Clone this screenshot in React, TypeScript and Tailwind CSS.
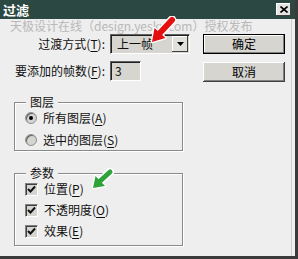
const font = "font-['SimSun','Noto_Sans_CJK_SC',sans-serif]";

const Ul = ({ c }: { c: string }) => <span className="underline underline-offset-2">{c}</span>;

const Checkbox = () => (
  <span className="w-[13px] h-[13px] border border-t-[#808080] border-l-[#808080] border-b-white border-r-white bg-[#d4d4d0] flex items-center justify-center shadow-[inset_1px_1px_0_#404040]">
    <svg width="9" height="9" viewBox="0 0 9 9">
      <path d="M1 4 L3.5 6.5 L8 1.5" stroke="#111" strokeWidth="2" fill="none" />
    </svg>
  </span>
);

const Radio = ({ on }: { on?: boolean }) => (
  <span className="w-[12px] h-[12px] rounded-full bg-[#d4d4d0] border border-[#909090] flex items-center justify-center shadow-[inset_1px_1px_0_#606060]">
    {on && <span className="w-[4px] h-[4px] rounded-full bg-black" />}
  </span>
);

const Button = ({ label, def }: { label: string; def?: boolean }) => (
  <div
    className={`w-[82px] h-[20px] flex items-center justify-center text-[12px] text-black bg-[#d6d5cf] ${
      def ? "border border-black shadow-[inset_-1px_-1px_0_#808080,inset_1px_1px_0_#fff]" : "shadow-[inset_-1px_-1px_0_#404040,inset_1px_1px_0_#fff,inset_-2px_-2px_0_#808080]"
    }`}
  >
    {label}
  </div>
);

const Group = ({ title, children, h, gap }: { title: string; children: React.ReactNode; h: string; gap: string }) => (
  <div className={`relative w-[169px] ${h} border border-[#8a8a8a] shadow-[1px_1px_0_#fff,inset_1px_1px_0_#fff]`}>
    <span className="absolute -top-[8px] left-[11px] px-[4px] bg-[#eeeeee] text-[12px] leading-[14px]">{title}</span>
    <div className={`flex flex-col pt-[8px] pl-[10px] ${gap}`}>{children}</div>
  </div>
);

const Row = ({ icon, text, u }: { icon: React.ReactNode; text: string; u: string }) => (
  <label className="flex items-center gap-[6px] text-[12px] leading-[14px]">
    {icon}
    <span>
      {text}(<Ul c={u} />)
    </span>
  </label>
);

export default function App() {
  return (
    <div className={`${font} w-[298px] h-[259px] bg-[#eeeeee] relative flex flex-col border-r-[3px] border-b-[3px] border-[#3a3a3a] text-[#111]`}>
      <div className="h-[19px] bg-[#2b4843] flex items-center justify-between pl-[3px] pr-[4px] shrink-0">
        <span className="text-white font-bold text-[13px] leading-none">过滤</span>
        <span className="w-[15px] h-[13px] bg-[#e4e4e0] flex items-center justify-center shadow-[inset_-1px_-1px_0_#404040,inset_1px_1px_0_#fff]">
          <svg width="8" height="7" viewBox="0 0 8 7">
            <path d="M0.5 0.5 L7.5 6.5 M7.5 0.5 L0.5 6.5" stroke="#000" strokeWidth="1.6" />
          </svg>
        </span>
      </div>
      <div className="flex-1 relative border-r border-[#d0d0d0] mr-[3px]">
        <div className="absolute left-[10px] top-[0px] text-[12px] text-[#b8b8b8] whitespace-nowrap leading-[14px]">
          天极设计在线（design.yesky.com）授权发布
        </div>
        <div className="flex pt-[15px] pl-[12px]">
          <div className="flex flex-col gap-[7px] w-[191px]">
            <div className="flex items-center">
              <span className="w-[98px] text-right text-[12px] pr-[5px]">
                过渡方式(<Ul c="T" />):
              </span>
              <div className="w-[80px] h-[20px] flex bg-[#d6d5cf] border border-t-[#606060] border-l-[#606060] border-b-white border-r-white shadow-[inset_1px_1px_0_#202020]">
                <span className="flex-1 text-[12px] pl-[6px] leading-[17px]">上一帧</span>
                <span className="w-[16px] h-[16px] mt-[1px] mr-[1px] bg-[#e0e0dc] flex items-center justify-center shadow-[inset_-1px_-1px_0_#404040,inset_1px_1px_0_#fff]">
                  <svg width="7" height="4" viewBox="0 0 7 4"><path d="M0 0 H7 L3.5 4 Z" fill="#000" /></svg>
                </span>
              </div>
            </div>
            <div className="flex items-center">
              <span className="w-[98px] text-right text-[12px] pr-[5px]">
                要添加的帧数(<Ul c="F" />):
              </span>
              <div className="w-[31px] h-[20px] bg-[#d6d5cf] border border-t-[#606060] border-l-[#606060] border-b-white border-r-white shadow-[inset_1px_1px_0_#202020] text-[12px] pl-[4px] leading-[17px]">
                3
              </div>
            </div>
          </div>
          <div className="flex flex-col gap-[8px]">
            <Button label="确定" def />
            <Button label="取消" />
          </div>
        </div>
        <div className="flex flex-col gap-[22px] pl-[14px] pt-[20px]">
          <Group title="图层" h="h-[49px]" gap="gap-[8px]">
            <Row icon={<Radio on />} text="所有图层" u="A" />
            <Row icon={<Radio />} text="选中的图层" u="S" />
          </Group>
          <Group title="参数" h="h-[73px]" gap="gap-[7px]">
            <Row icon={<Checkbox />} text="位置" u="P" />
            <Row icon={<Checkbox />} text="不透明度" u="O" />
            <Row icon={<Checkbox />} text="效果" u="E" />
          </Group>
        </div>
      </div>
      <svg className="absolute left-[148px] top-[16px]" width="30" height="30" viewBox="0 0 30 30">
        <g stroke="#fff" strokeWidth="2.5" strokeLinejoin="round">
          <line x1="10" y1="19" x2="24" y2="4" strokeWidth="9" strokeLinecap="round" />
          <path d="M4 26 L17.5 22 L6.5 12 Z" />
        </g>
        <line x1="10" y1="19" x2="24" y2="4" stroke="#e41010" strokeWidth="6" strokeLinecap="round" />
        <path d="M4 26 L17.5 22 L6.5 12 Z" fill="#e41010" />
      </svg>
      <svg className="absolute left-[88px] top-[166px]" width="28" height="28" viewBox="0 0 28 28">
        <g stroke="#fff" strokeWidth="2.5" strokeLinejoin="round">
          <line x1="10" y1="17" x2="22" y2="6" strokeWidth="8" strokeLinecap="round" />
          <path d="M5 22 L17 20 L7.5 10 Z" />
        </g>
        <line x1="10" y1="17" x2="22" y2="6" stroke="#2fa33a" strokeWidth="5" strokeLinecap="round" />
        <path d="M5 22 L17 20 L7.5 10 Z" fill="#2fa33a" />
      </svg>
    </div>
  );
}
